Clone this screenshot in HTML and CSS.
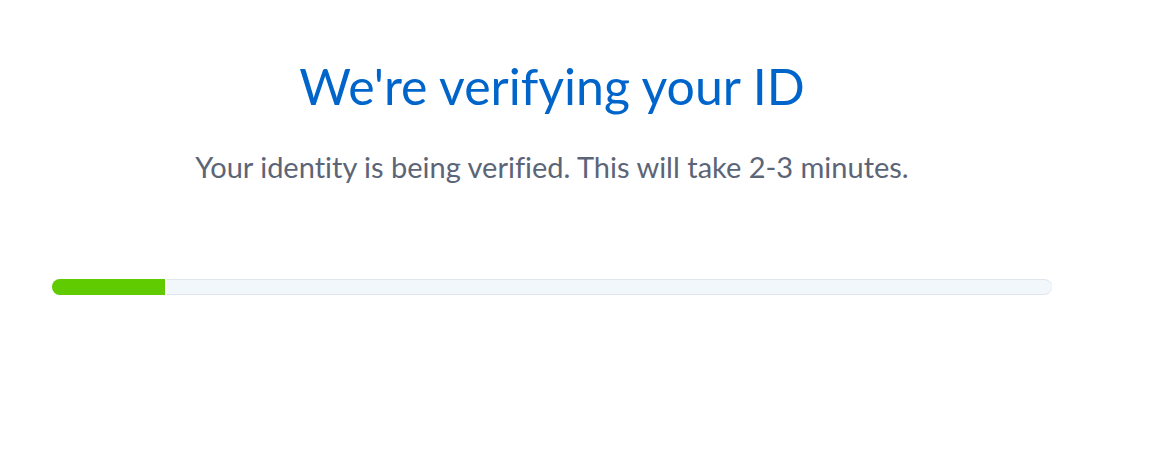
FILE: index.html
```html
<!DOCTYPE html>
<html lang="en">
<head>
<meta charset="utf-8">
<meta name="viewport" content="width=device-width, initial-scale=1">
<title>We're verifying your ID</title>
<link rel="stylesheet" href="styles.css">
</head>
<body>
<main class="verify">
  <h1 class="verify-title">We're verifying your ID</h1>
  <p class="verify-text" id="status">Your identity is being verified. This will take 2-3 minutes.</p>
  <div class="progress" role="progressbar" aria-labelledby="status" aria-valuemin="0" aria-valuemax="100" aria-valuenow="11">
    <div class="progress-fill" style="width: 11.5%"></div>
  </div>
</main>
</body>
</html>
```
FILE: styles.css
```css
* {
  box-sizing: border-box;
}

body {
  margin: 0;
  background: #ffffff;
  font-family: Lato, "Open Sans", sans-serif;
  font-variant-ligatures: none;
}

.verify {
  padding: 54px 120px 56px 52px;
  text-align: center;
}

.verify-title {
  margin: 0;
  color: #0065ca;
  font-size: 50px;
  font-weight: 400;
  line-height: 64px;
}

.verify-text {
  margin: 29px 0 0;
  color: #5c6577;
  font-size: 29px;
  line-height: 40px;
}

.progress {
  height: 16px;
  margin-top: 92px;
  overflow: hidden;
  border-radius: 8px;
  background: #f2f7fb;
  box-shadow: inset 0 1px #dfe6ed, inset 0 -1px #dfe6ed;
}

.progress-fill {
  height: 100%;
  border-right: 2px solid #ffffff;
  background: #60cb00;
}
```
